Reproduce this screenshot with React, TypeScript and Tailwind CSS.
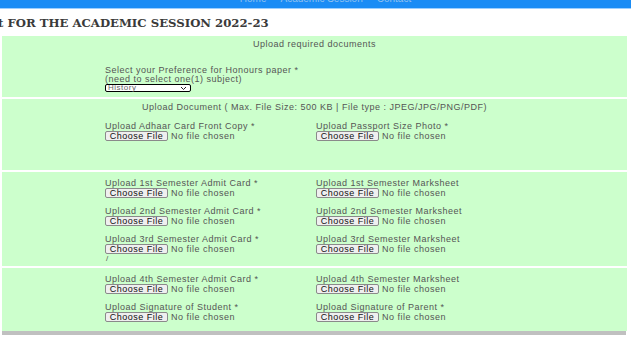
import React from 'react';

const txt = "text-[9px] tracking-[0.5px] text-[#555] whitespace-nowrap";

const FileField: React.FC<{ label: string }> = ({ label }) => (
  <div className="flex flex-col">
    <p className={`${txt} leading-[9px]`}>{label}</p>
    <div className="flex items-center h-[10px]">
      <button className="h-[10px] w-[63px] flex items-center justify-center bg-[#efefef] border border-[#8a8a8a] rounded-[2px] text-[9px] tracking-[0.5px] leading-none text-[#111] whitespace-nowrap">
        Choose File
      </button>
      <span className={`ml-[3px] ${txt} leading-none`}>No file chosen</span>
    </div>
  </div>
);

const FieldGrid: React.FC<{ items: string[]; className?: string }> = ({ items, className = "" }) => (
  <div className={`grid grid-cols-[211px_1fr] gap-y-[9px] pl-[103px] ${className}`}>
    {items.map((it, i) => (
      <FileField key={i} label={it} />
    ))}
  </div>
);

const App: React.FC = () => {
  return (
    <div className="w-[631px] h-[340px] bg-white overflow-hidden font-['Liberation_Sans',Arial,sans-serif]">
      {/* top nav bar, mostly cropped */}
      <div className="h-[8px] bg-[#1a8cf5] overflow-hidden flex justify-center">
        <div className="flex gap-[14px] -mt-[6px] text-[10px] leading-[10px] text-[#8fc0f0] whitespace-nowrap pl-[20px]">
          <span>Home</span>
          <span>Academic Session</span>
          <span>Contact</span>
        </div>
      </div>
      <div className="h-[1px] bg-[#9ccfff]" />

      {/* title */}
      <div className="h-[27px] flex items-center -ml-[2px] pt-[1px]">
        <h2 className="font-['DejaVu_Serif',serif] font-bold text-[11.7px] leading-[14px] text-[#3a3a3a] whitespace-nowrap">
          t FOR THE ACADEMIC SESSION 2022-23
        </h2>
      </div>

      <div className="ml-[2px] mr-[4px] flex flex-col gap-[2px]">
        {/* section 1 */}
        <section className="h-[61px] bg-[#ccffcc] pt-[4px]">
          <p className={`text-center ${txt} leading-[9px]`}>Upload required documents</p>
          <div className="pl-[103px] mt-[17px]">
            <p className={`${txt} leading-[9px]`}>Select your Preference for Honours paper *</p>
            <p className={`${txt} leading-[9px]`}>(need to select one(1) subject)</p>
            <div className="w-[86px] h-[8px] border border-black rounded-[2px] bg-white flex items-center justify-between px-[2px]">
              <span className="text-[8px] tracking-[0.5px] leading-none text-[#666]">History</span>
              <svg width="7" height="5" viewBox="0 0 7 5" className="mr-[1px]">
                <path d="M1 1 L3.5 3.5 L6 1" stroke="#222" strokeWidth="1" fill="none" />
              </svg>
            </div>
          </div>
        </section>

        {/* section 2 */}
        <section className="h-[71px] bg-[#ccffcc] pt-[4px]">
          <p className={`text-center ${txt} leading-[9px]`}>
            Upload Document ( Max. File Size: 500 KB | File type : JPEG/JPG/PNG/PDF)
          </p>
          <FieldGrid
            className="mt-[10px]"
            items={["Upload Adhaar Card Front Copy *", "Upload Passport Size Photo *"]}
          />
        </section>

        {/* section 3 */}
        <section className="h-[94px] bg-[#ccffcc] pt-[7px]">
          <FieldGrid
            items={[
              "Upload 1st Semester Admit Card *",
              "Upload 1st Semester Marksheet",
              "Upload 2nd Semester Admit Card *",
              "Upload 2nd Semester Marksheet",
              "Upload 3rd Semester Admit Card *",
              "Upload 3rd Semester Marksheet",
            ]}
          />
          <p className="pl-[104px] text-[8px] leading-[9px] text-[#555]">/</p>
        </section>

        {/* section 4 */}
        <section className="h-[63px] bg-[#ccffcc] pt-[7px]">
          <FieldGrid
            items={[
              "Upload 4th Semester Admit Card *",
              "Upload 4th Semester Marksheet",
              "Upload Signature of Student *",
              "Upload Signature of Parent *",
            ]}
          />
        </section>
      </div>
      <div className="ml-[2px] mr-[5px] h-[4px] bg-[#c0c0c0]" />
    </div>
  );
};

export default App;
